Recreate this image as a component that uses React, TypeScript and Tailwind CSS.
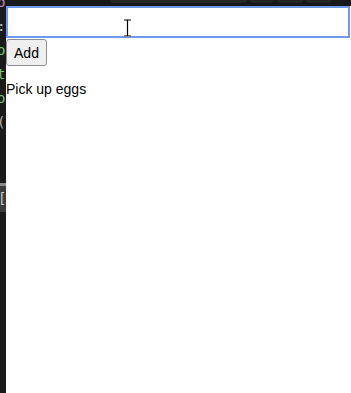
import { useState } from "react";

const gutter = [
  { ch: "o", cls: "text-[#c586c0]" },
  { ch: ":", cls: "text-[#c8c8c8]" },
  { ch: "o", cls: "text-[#6fc46f]" },
  { ch: "t", cls: "text-[#6fc46f]" },
  { ch: "o", cls: "text-[#6fc46f]" },
  { ch: "(", cls: "text-[#b0b0b0]" },
  { ch: "", cls: "" },
];

export default function App() {
  const [todos, setTodos] = useState<string[]>(["Pick up eggs"]);
  const [text, setText] = useState("");

  const add = () => {
    if (!text.trim()) return;
    setTodos([...todos, text]);
    setText("");
  };

  return (
    <div className="relative flex h-[393px] w-[351px] overflow-hidden bg-[#1b1b1b] font-['Liberation_Sans',Arial,sans-serif]">
      {/* editor gutter peeking out on the left */}
      <div className="flex w-[6px] shrink-0 flex-col overflow-hidden font-['DejaVu_Sans_Mono',monospace] text-[14px] leading-[24px]">
        <div className="-mt-[10px]" />
        {gutter.map((g, i) => (
          <div key={i} className={`-ml-[3px] h-[24px] ${g.cls}`}>
            {g.ch}
          </div>
        ))}
        <div className="h-[25px]" />
        <div className="h-[3px] bg-[#8a8a8a]" />
        <div className="-ml-[2px] h-[26px] bg-[#3c3c3c] text-[#c8c8c8]">[</div>
      </div>

      <div className="flex min-w-0 flex-1 flex-col">
        {/* tab bar edge */}
        <div className="flex h-[6px] shrink-0 gap-[3px] bg-[#181818] pl-[104px]">
          <div className="h-[3px] w-[137px] rounded-b-sm bg-[#262626]" />
          <div className="h-[3px] w-[24px] rounded-b-sm bg-[#242424]" />
          <div className="h-[3px] w-[26px] rounded-b-sm bg-[#242424]" />
          <div className="h-[3px] w-[26px] rounded-b-sm bg-[#242424]" />
        </div>

        <div className="flex-1 bg-white text-[14px] text-black">
          <input
            value={text}
            onChange={(e) => setText(e.target.value)}
            className="block h-[32px] w-[344px] border-2 border-[#6f98ee] bg-white px-1 outline-none"
          />
          <button
            onClick={add}
            className="ml-0 mt-[1px] h-[27px] w-[41px] rounded-[3px] border border-[#8f8f8f] bg-[#efefef] text-[14px] leading-none text-black"
          >
            Add
          </button>
          <ul className="mt-[15px]">
            {todos.map((t, i) => (
              <li key={i} className="leading-[16px]">
                {t}
              </li>
            ))}
          </ul>
        </div>
      </div>

      {/* mouse cursor (I-beam) */}
      <svg className="pointer-events-none absolute left-[123px] top-[19px]" width="9" height="18" viewBox="0 0 9 18">
        <path d="M1 1h3l0.5 0.5 0.5-0.5h3M4.5 1.5v15M1 17h3l0.5-0.5 0.5 0.5h3" stroke="#fff" strokeWidth="3" fill="none" />
        <path d="M1 1h3l0.5 0.5 0.5-0.5h3M4.5 1.5v15M1 17h3l0.5-0.5 0.5 0.5h3" stroke="#000" strokeWidth="1.2" fill="none" />
      </svg>
    </div>
  );
}
